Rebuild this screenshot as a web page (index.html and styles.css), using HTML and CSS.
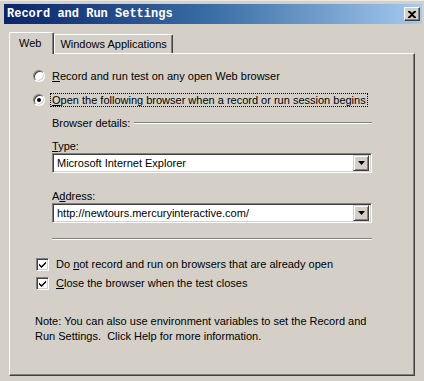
FILE: index.html
```html
<!DOCTYPE html>
<html>
<head>
<meta charset="utf-8">
<link rel="stylesheet" href="styles.css">
</head>
<body>
<div class="window">
  <div class="titlebar">
    <span class="title">Record and Run Settings</span>
    <span class="close">
      <svg width="8" height="7" viewBox="0 0 8 7"><path d="M0 0h2l2 2 2-2h2v1L5 3.5 8 6v1H6L4 5 2 7H0V6l3-2.5L0 1z" fill="#000"/></svg>
    </span>
  </div>
  <div class="client">
    <div class="tabs">
      <div class="tab active">Web</div>
      <div class="tab">Windows Applications</div>
    </div>
    <div class="panel">
      <div class="radio-row">
        <span class="radio"></span>
        <span class="label"><u>R</u>ecord and run test on any open Web browser</span>
      </div>
      <div class="radio-row second">
        <span class="radio checked"><span class="dot"></span></span>
        <span class="label focus"><u>O</u>pen the following browser when a record or run session begins</span>
      </div>
      <div class="details">
        <div class="group-head"><span>Browser details:</span><span class="rule"></span></div>
        <div class="field-label"><u>T</u>ype:</div>
        <div class="combo">
          <span class="value">Microsoft Internet Explorer</span>
          <span class="arrow"><svg width="7" height="4" viewBox="0 0 7 4"><path d="M0 0h7L3.5 4z" fill="#000"/></svg></span>
        </div>
        <div class="field-label addr">A<u>d</u>dress:</div>
        <div class="combo">
          <span class="value">http://newtours.mercuryinteractive.com/</span>
          <span class="arrow"><svg width="7" height="4" viewBox="0 0 7 4"><path d="M0 0h7L3.5 4z" fill="#000"/></svg></span>
        </div>
        <div class="sep"></div>
      </div>
      <div class="check-row first">
        <span class="check"><svg width="9" height="9" viewBox="0 0 9 9"><path d="M1 3.5l2.5 2.5L8 1.5v2L3.5 8 1 5.5z" fill="#000"/></svg></span>
        <span class="label">Do <u>n</u>ot record and run on browsers that are already open</span>
      </div>
      <div class="check-row second">
        <span class="check"><svg width="9" height="9" viewBox="0 0 9 9"><path d="M1 3.5l2.5 2.5L8 1.5v2L3.5 8 1 5.5z" fill="#000"/></svg></span>
        <span class="label"><u>C</u>lose the browser when the test closes</span>
      </div>
      <p class="note">Note: You can also use environment variables to set the Record and<br>Run Settings.&nbsp; Click Help for more information.</p>
    </div>
  </div>
</div>
</body>
</html>
```
FILE: styles.css
```css
html, body {
  margin: 0;
  padding: 0;
  background: #d4d0c8;
  width: 424px;
  height: 381px;
  overflow: hidden;
}
body {
  font-family: "Liberation Sans", Arial, sans-serif;
  font-size: 11px;
  color: #000;
}
.window {
  box-sizing: border-box;
  width: 424px;
  height: 381px;
  padding: 3px 2px 0 3px;
  border-top: 1px solid #ebe9e4;
}
.titlebar {
  height: 20px;
  margin-left: 1px;
  background: linear-gradient(to right, #0a246a 0%, #3a6ea5 50%, #a6caf0 100%);
  display: flex;
  align-items: center;
  justify-content: space-between;
  padding: 0 2px 0 3px;
}
.title {
  font-family: "Liberation Mono", "DejaVu Sans Mono", monospace;
  font-weight: bold;
  font-size: 12px;
  color: #fff;
}
.close {
  box-sizing: border-box;
  width: 16px;
  height: 14px;
  background: #d4d0c8;
  border-top: 1px solid #fff;
  border-left: 1px solid #fff;
  border-right: 1px solid #404040;
  border-bottom: 1px solid #404040;
  box-shadow: inset -1px -1px 0 #808080;
  display: flex;
  align-items: center;
  justify-content: center;
}
.client {
  padding: 8px 7px 0 6px;
}
.tabs {
  display: flex;
  align-items: flex-end;
  height: 21px;
  padding-left: 1px;
}
.tab {
  box-sizing: border-box;
  height: 19px;
  padding: 3px 5px 0 5px;
  border-top: 1px solid #fff;
  border-left: 1px solid #fff;
  border-right: 1px solid #404040;
  box-shadow: inset -1px 0 0 #808080;
  border-radius: 2px 2px 0 0;
}
.tab.active {
  height: 22px;
  padding: 4px 12px 0 9px;
  position: relative;
  z-index: 1;
  margin-bottom: -1px;
  background: #d4d0c8;
  margin-left: -1px;
}
.panel {
  box-sizing: border-box;
  height: 323px;
  border-top: 1px solid #fff;
  border-left: 1px solid #fff;
  border-right: 1px solid #404040;
  border-bottom: 1px solid #404040;
  box-shadow: inset -1px -1px 0 #808080;
  padding: 14px 0 0 23px;
}
.radio-row, .check-row {
  display: flex;
  align-items: center;
  height: 16px;
}
.radio-row.second { margin-top: 8px; }
.radio {
  box-sizing: border-box;
  width: 12px;
  height: 12px;
  border-radius: 50%;
  background: #fff;
  border: 1px solid;
  border-color: #808080 #fff #fff #808080;
  box-shadow: inset 1px 1px 0 #404040, inset -1px -1px 0 #d4d0c8;
  display: flex;
  align-items: center;
  justify-content: center;
  margin-right: 7px;
}
.dot {
  width: 4px;
  height: 4px;
  border-radius: 50%;
  background: #000;
}
.label { white-space: nowrap; }
.label.focus {
  outline: 1px dotted #000;
  padding: 0 1px;
  margin-left: -1px;
}
.details {
  padding: 8px 0 0 19px;
  width: 320px;
}
.group-head {
  display: flex;
  align-items: center;
  height: 14px;
}
.rule {
  flex: 1;
  height: 0;
  border-top: 1px solid #808080;
  border-bottom: 1px solid #fff;
  margin-left: 4px;
}
.field-label { margin-top: 9px; line-height: 14px; }
.field-label.addr { margin-top: 16px; }
.combo {
  box-sizing: border-box;
  height: 20px;
  background: #fff;
  border: 1px solid;
  border-color: #808080 #fff #fff #808080;
  box-shadow: inset 1px 1px 0 #404040, inset -1px -1px 0 #d4d0c8;
  display: flex;
  align-items: center;
  padding: 2px 2px 2px 4px;
}
.combo .value { flex: 1; }
.arrow {
  box-sizing: border-box;
  width: 16px;
  height: 16px;
  background: #d4d0c8;
  border-top: 1px solid #d4d0c8;
  border-left: 1px solid #d4d0c8;
  border-right: 1px solid #404040;
  border-bottom: 1px solid #404040;
  box-shadow: inset 1px 1px 0 #fff, inset -1px -1px 0 #808080;
  display: flex;
  align-items: center;
  justify-content: center;
}
.sep {
  margin-top: 15px;
  border-top: 1px solid #808080;
  border-bottom: 1px solid #fff;
}
.check-row.first { margin-top: 16px; }
.check-row.second { margin-top: 3px; }
.check {
  box-sizing: border-box;
  width: 13px;
  height: 13px;
  background: #fff;
  border: 1px solid;
  border-color: #808080 #fff #fff #808080;
  box-shadow: inset 1px 1px 0 #404040, inset -1px -1px 0 #d4d0c8;
  display: flex;
  align-items: center;
  justify-content: center;
  margin: 0 7px 0 3px;
}
.note {
  margin: 23px 0 0 2px;
  line-height: 15px;
}
u { text-decoration: underline; text-underline-offset: 1px; }
```
